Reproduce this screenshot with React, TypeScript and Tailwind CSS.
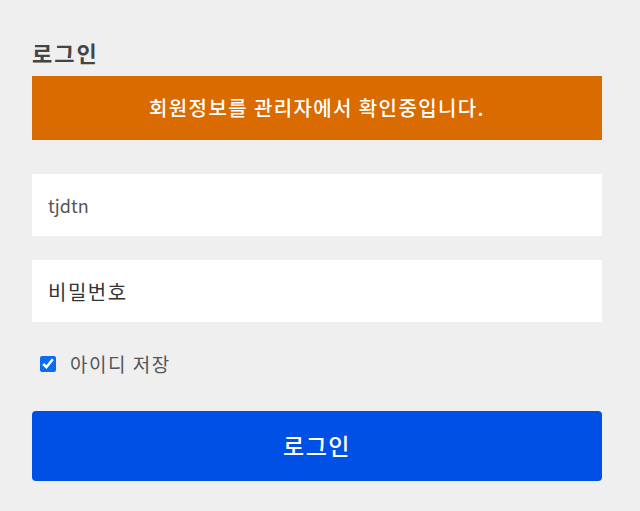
import React, { useState } from "react";

const font = { fontFamily: '"Noto Sans CJK KR", "Noto Sans", sans-serif' };

export default function App() {
  const [saveId, setSaveId] = useState(true);

  return (
    <div className="w-[640px] h-[511px] bg-[#efefef] pl-[32px] pr-[38px] pt-[35px]" style={font}>
      <h2 className="text-[22px] leading-[34px] font-bold tracking-[2px] text-[#444]">로그인</h2>

      <div className="mt-[7px] h-[64px] bg-[#d96b00] flex items-center justify-center text-white text-[20px] tracking-[1.4px] font-medium">
        회원정보를 관리자에서 확인중입니다.
      </div>

      <div className="mt-[34px] flex flex-col gap-[24px]">
        <input
          className="h-[62px] w-full bg-white px-[16px] text-[18px] text-[#555] outline-none"
          defaultValue="tjdtn"
        />
        <input
          className="h-[62px] w-full bg-white px-[16px] text-[20px] tracking-[1.5px] text-[#333] placeholder:text-[#333] outline-none"
          placeholder="비밀번호"
          type="password"
        />
      </div>

      <label className="mt-[28px] ml-[8px] flex items-center gap-[14px] text-[19px] tracking-[1.5px] text-[#555]">
        <input
          type="checkbox"
          checked={saveId}
          onChange={() => setSaveId(!saveId)}
          className="size-[16px] m-0 accent-[#0a6cf0]"
        />
        아이디 저장
      </label>

      <button className="mt-[32px] h-[70px] w-full rounded-[4px] bg-[#0050e6] text-white text-[23px] tracking-[1.5px] font-medium">
        로그인
      </button>
    </div>
  );
}
